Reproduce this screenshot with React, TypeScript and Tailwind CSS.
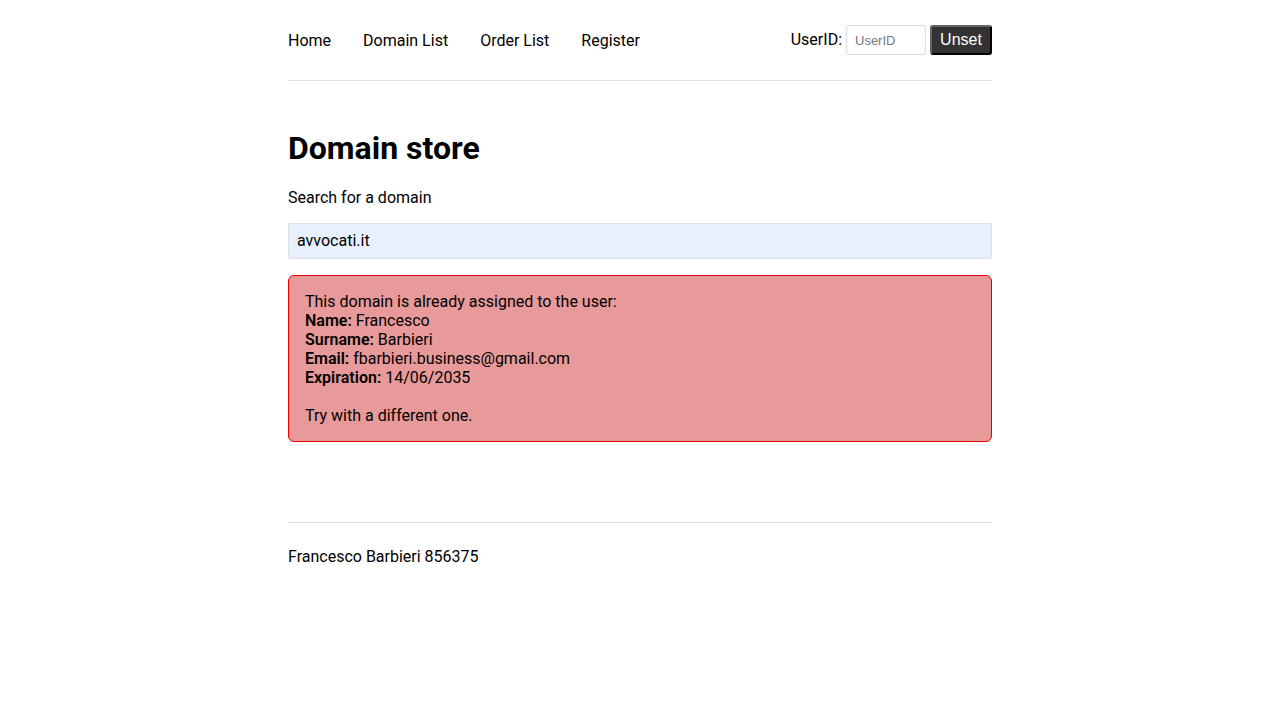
export default function App() {
  return (
    <div className="min-h-screen bg-white text-black" style={{ fontFamily: 'Roboto, "Liberation Sans", sans-serif' }}>
      <div className="mx-auto w-[704px]">
        <header className="flex h-[81px] items-center justify-between border-b border-[#dddddd] text-base">
          <nav className="flex gap-8 leading-[19px]">
            <a>Home</a>
            <a>Domain List</a>
            <a>Order List</a>
            <a>Register</a>
          </nav>
          <div className="flex items-center gap-1">
            <span className="leading-[19px] -translate-y-[1px]">UserID:</span>
            <input
              placeholder="UserID"
              className="h-[30px] w-[80px] rounded-[3px] border border-[#dddddd] px-2 text-[13px] placeholder:text-[#777777]"
              style={{ fontFamily: '"Liberation Sans", Arial, sans-serif' }}
            />
            <button
              className="h-[30px] w-[62px] rounded-[3px] border-2 border-[#111111] bg-[#333333] text-base text-white"
              style={{ fontFamily: '"Liberation Sans", Arial, sans-serif', borderStyle: 'outset' }}
            >
              Unset
            </button>
          </div>
        </header>

        <main className="pt-[48px]">
          <h1 className="text-[32px] font-bold leading-[38px]">Domain store</h1>
          <p className="mt-[21px] leading-[19px]">Search for a domain</p>
          <div className="mt-[16px] flex h-[36px] items-center rounded-[2px] border border-[#dcdfe4] bg-[#e8f0fe] px-2 text-base">
            avvocati.it
          </div>
          <div className="mt-[16px] rounded-[6px] border border-[#e50000] bg-[#e89999] px-4 py-4 leading-[19px]">
            <p>This domain is already assigned to the user:</p>
            <p><b className="font-semibold">Name:</b> Francesco</p>
            <p><b className="font-semibold">Surname:</b> Barbieri</p>
            <p><b className="font-semibold">Email:</b> fbarbieri.business@gmail.com</p>
            <p><b className="font-semibold">Expiration:</b> 14/06/2035</p>
            <p className="mt-[19px]">Try with a different one.</p>
          </div>
        </main>

        <footer className="mt-[80px] border-t border-[#dddddd] pt-[24px] leading-[19px]">
          Francesco Barbieri 856375
        </footer>
      </div>
    </div>
  );
}
